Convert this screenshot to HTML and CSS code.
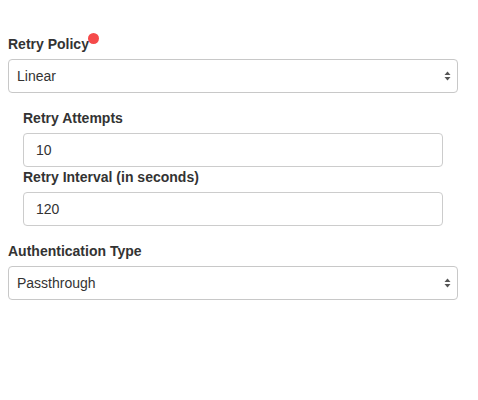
FILE: index.html
```html
<!DOCTYPE html>
<html>
<head>
<meta charset="utf-8">
<link rel="stylesheet" href="styles.css">
</head>
<body>
<div class="form">
  <div class="form-group">
    <label class="label">Retry Policy<span class="required-dot"></span></label>
    <div class="select-wrap">
      <select class="control select"><option>Linear</option></select>
      <svg class="arrows" width="7" height="10" viewBox="0 0 7 10"><path d="M3.5 0.5 L6.5 4 L0.5 4 Z" fill="#555"/><path d="M0.5 6 L6.5 6 L3.5 9.5 Z" fill="#555"/></svg>
    </div>
  </div>
  <div class="nested form-group">
    <label class="label">Retry Attempts</label>
    <input class="control input" type="text" value="10">
    <label class="label">Retry Interval (in seconds)</label>
    <input class="control input" type="text" value="120">
  </div>
  <div class="form-group">
    <label class="label">Authentication Type</label>
    <div class="select-wrap">
      <select class="control select"><option>Passthrough</option></select>
      <svg class="arrows" width="7" height="10" viewBox="0 0 7 10"><path d="M3.5 0.5 L6.5 4 L0.5 4 Z" fill="#555"/><path d="M0.5 6 L6.5 6 L3.5 9.5 Z" fill="#555"/></svg>
    </div>
  </div>
</div>
</body>
</html>
```
FILE: styles.css
```css
html, body {
  margin: 0;
  padding: 0;
  background: #fff;
}
body {
  font-family: "Liberation Sans", Arial, sans-serif;
  font-size: 14px;
  line-height: 20px;
  color: #333;
}
.form {
  width: 450px;
  padding: 34px 0 0 8px;
}
.form-group {
  margin-bottom: 15px;
}
.nested {
  margin-left: 15px;
  margin-right: 15px;
}
.label {
  display: block;
  font-weight: bold;
  margin-bottom: 5px;
  position: relative;
}
.required-dot {
  display: inline-block;
  width: 11px;
  height: 11px;
  border-radius: 50%;
  background: #f54a4a;
  vertical-align: top;
  margin-top: -1px;
  margin-left: -1px;
}
.control {
  display: block;
  box-sizing: border-box;
  width: 100%;
  height: 34px;
  border: 1px solid #ccc;
  border-radius: 4px;
  background: #fff;
  font-family: "Liberation Sans", Arial, sans-serif;
  font-size: 14px;
  color: #333;
  margin: 0;
  outline: none;
}
.input {
  padding: 6px 12px;
}
.select-wrap {
  position: relative;
}
.select {
  -webkit-appearance: none;
  appearance: none;
  padding: 0 24px 0 8px;
  border-color: #c8c8c8;
}
.arrows {
  position: absolute;
  right: 7px;
  top: 12px;
  pointer-events: none;
}
```
